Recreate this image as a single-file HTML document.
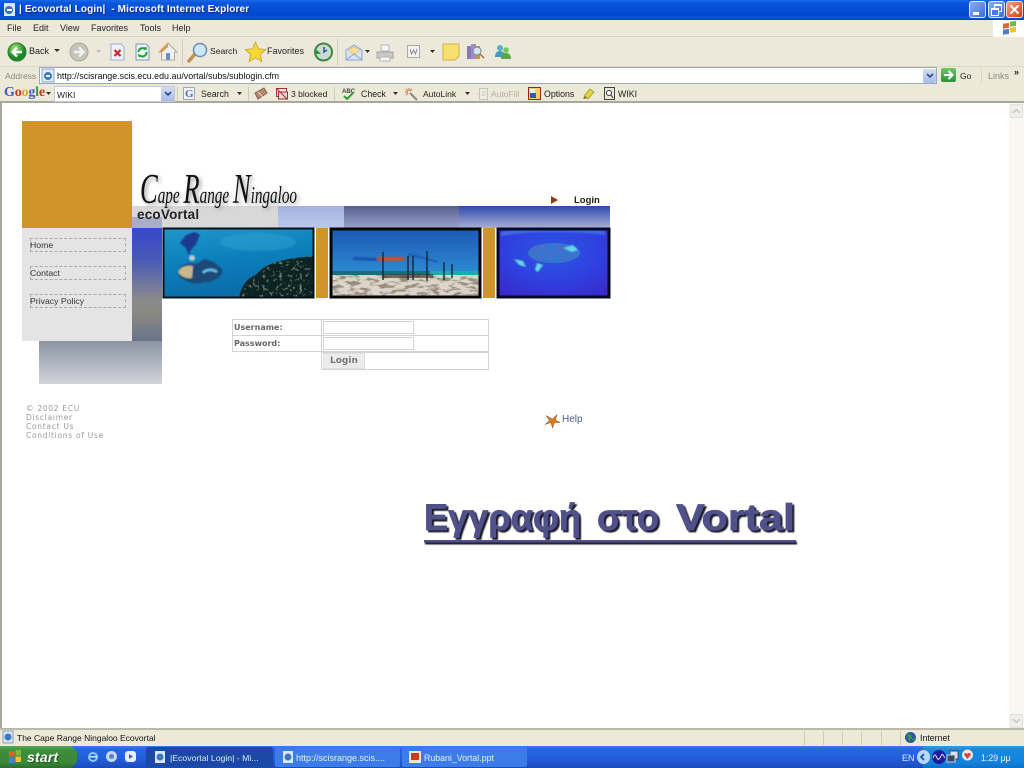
<!DOCTYPE html>
<html><head><meta charset="utf-8"><title>Ecovortal Login</title>
<style>
html,body{margin:0;padding:0;width:1024px;height:768px;overflow:hidden;background:#fff}
#p{position:absolute;left:0;top:0;width:1024px;height:768px;overflow:hidden;background:#fff;filter:blur(.3px);font-family:"Liberation Sans",sans-serif;font-size:9px;color:#222}
.a,.t{position:absolute}
.t{white-space:nowrap;line-height:12px}
svg{position:absolute;overflow:visible}
</style></head><body><div id="p">

<!-- title bar -->
<div class="a" style="left:0;top:0;width:1024px;height:20px;background:linear-gradient(#1a6ae8 0,#0a55dc 3px,#0450d8 8px,#0248cc 15px,#0a58dc 18px,#0a3ca8 20px)"></div>
<svg style="left:2px;top:2px" width="15" height="15"><rect x="2" y="1" width="11" height="13" fill="#dde6f4"/><circle cx="7" cy="8" r="4" fill="#3a70b8"/><rect x="5" y="7" width="5" height="2" fill="#fff"/></svg>
<div class="t" style="left:19px;top:4px;color:#fff;font-weight:bold;font-size:10px;letter-spacing:.14px;text-shadow:1px 1px 0 #0a2c8c">| Ecovortal Login|&nbsp; - Microsoft Internet Explorer</div>
<div class="a" style="left:969px;top:1px;width:17px;height:17px;border-radius:3px;background:linear-gradient(135deg,#8ab0f0,#3a6cd8);border:1px solid #dfe8fa;box-sizing:border-box"><div class="a" style="left:3px;top:10px;width:6px;height:3px;background:#fff"></div></div>
<div class="a" style="left:988px;top:1px;width:17px;height:17px;border-radius:3px;background:linear-gradient(135deg,#8ab0f0,#3a6cd8);border:1px solid #dfe8fa;box-sizing:border-box"><div class="a" style="left:5px;top:2px;width:6px;height:5px;border:1px solid #fff;border-top-width:2px"></div><div class="a" style="left:2px;top:6px;width:6px;height:5px;border:1px solid #fff;border-top-width:2px;background:#4a7ae0"></div></div>
<div class="a" style="left:1006px;top:1px;width:17px;height:17px;border-radius:3px;background:linear-gradient(135deg,#f0a080,#d83c14);border:1px solid #f4e0d8;box-sizing:border-box"><svg width="15" height="15"><path d="M3.500 3.500l8 8M11.500 3.500l-8 8" stroke="#fff" stroke-width="2"/></svg></div>

<!-- menu bar -->
<div class="a" style="left:0;top:20px;width:1024px;height:17px;background:#ece9d8;border-bottom:1px solid #d8d4c0;box-sizing:border-box"></div>
<div class="t" style="left:7px;top:22px">File</div>
<div class="t" style="left:33px;top:22px">Edit</div>
<div class="t" style="left:60px;top:22px">View</div>
<div class="t" style="left:91px;top:22px">Favorites</div>
<div class="t" style="left:140px;top:22px">Tools</div>
<div class="t" style="left:172px;top:22px">Help</div>
<div class="a" style="left:993px;top:20px;width:31px;height:17px;background:#fff"></div>
<svg style="left:1001px;top:20px" width="16" height="16"><g transform="skewY(-8)"><rect x="2" y="4" width="6" height="5" fill="#e8642c"/><rect x="9" y="3" width="6" height="5" fill="#7ab83c"/><rect x="2" y="10" width="6" height="5" fill="#4a7cd0"/><rect x="9" y="9" width="6" height="5" fill="#f0c030"/></g></svg>

<!-- main toolbar -->
<div class="a" style="left:0;top:37px;width:1024px;height:30px;background:#ede9da;border-bottom:1px solid #dcd8c8;box-sizing:border-box"></div>
<svg style="left:7px;top:42px" width="20" height="20"><defs><radialGradient id="g1" cx=".4" cy=".3"><stop offset="0" stop-color="#a8e878"/><stop offset="1" stop-color="#1a8a28"/></radialGradient></defs><circle cx="10" cy="10" r="9" fill="url(#g1)" stroke="#2a7a30"/><path d="M15 10H6M10 5.500L5.500 10 10 14.500" stroke="#fff" stroke-width="2.400" fill="none"/></svg>
<div class="t" style="left:29px;top:45px">Back</div>
<svg style="left:54px;top:49px" width="6" height="4"><path d="M0 0h6L3 3z" fill="#333"/></svg>
<svg style="left:69px;top:42px" width="20" height="20"><circle cx="10" cy="10" r="9" fill="#c4c4bc" stroke="#a8a8a0"/><path d="M5 10h9M10 5.500l4.500 4.500-4.500 4.500" stroke="#f2f2ee" stroke-width="2.400" fill="none"/></svg>
<svg style="left:96px;top:50px" width="5" height="3"><path d="M0 0h5L2.500 3z" fill="#bbb"/></svg>
<svg style="left:110px;top:43px" width="15" height="18"><path d="M1 1h10l3 3v13H1z" fill="#eef2fa" stroke="#9ab0d0"/><path d="M4.500 7l6 6M10.500 7l-6 6" stroke="#d42020" stroke-width="2.200"/></svg>
<svg style="left:135px;top:43px" width="15" height="18"><path d="M1 1h10l3 3v13H1z" fill="#eef2fa" stroke="#7a98b8"/><path d="M3.500 9a4 4 0 0 1 7-2.500M11.500 9a4 4 0 0 1-7 3" stroke="#20a030" stroke-width="2" fill="none"/><path d="M9 4l3 .5-.5 3zM6 14l-3-.5.500-3z" fill="#20a030"/></svg>
<svg style="left:158px;top:42px" width="20" height="19"><path d="M10 1L1 10h2.500v8h13v-8H19z" fill="#eef0f4" stroke="#b8a890"/><path d="M10 1L1 10h3.500L10 5z" fill="#e89838"/><rect x="8" y="11" width="4" height="7" fill="#6a90c8"/></svg>
<div class="a" style="left:182px;top:39px;width:1px;height:26px;background:#cfcbb8"></div>
<svg style="left:187px;top:42px" width="22" height="21"><path d="M8 12L2 19" stroke="#c89048" stroke-width="3.500" stroke-linecap="round"/><circle cx="13" cy="8" r="6.500" fill="#cfe8f8" stroke="#6a90b0" stroke-width="1.500"/></svg>
<div class="t" style="left:210px;top:45px;font-size:8.600px">Search</div>
<svg style="left:245px;top:42px" width="21" height="20"><path d="M10.500 0l3 6.800 7.300.7-5.500 4.900 1.600 7.200-6.400-3.800-6.400 3.800 1.600-7.200L.2 7.500l7.300-.7z" fill="#f4d838" stroke="#c8a020" stroke-width=".8"/></svg>
<div class="t" style="left:267px;top:45px">Favorites</div>
<svg style="left:313px;top:42px" width="20" height="20"><circle cx="10.500" cy="10" r="8.500" fill="#cfd8d8" stroke="#3a8a40" stroke-width="2"/><path d="M2 6v6h6z" fill="#2a9a30"/><path d="M11 5v5l3-2" stroke="#2a5a80" stroke-width="1.500" fill="none"/></svg>
<div class="a" style="left:337px;top:39px;width:1px;height:26px;background:#cfcbb8"></div>
<svg style="left:345px;top:44px" width="18" height="17"><path d="M1 6L9 1l8 5v10H1z" fill="#d8e4f8" stroke="#8aa4d0"/><path d="M3 6l6 5 6-5-6-3z" fill="#f4dc90" stroke="#d0b060" stroke-width=".5"/><path d="M1 16l8-6 8 6" fill="none" stroke="#8aa4d0"/></svg>
<svg style="left:365px;top:50px" width="5" height="3"><path d="M0 0h5L2.500 3z" fill="#333"/></svg>
<svg style="left:376px;top:44px" width="18" height="18"><path d="M5 1h8v6H5z" fill="#f4f4f4" stroke="#b8b8b8"/><path d="M1 8h16v6H1z" fill="#c8c8c4" stroke="#a4a4a4"/><path d="M4 13h10v4H4z" fill="#f4f4f0" stroke="#b8b8b8"/></svg>
<svg style="left:407px;top:45px" width="13" height="14"><rect x=".5" y=".5" width="12" height="12" fill="#f2f2f2" stroke="#a8a8a8"/><path d="M3 4l1.500 5 2-4 2 4L10 4" stroke="#8a8a8a" fill="none"/></svg>
<svg style="left:430px;top:50px" width="5" height="3"><path d="M0 0h5L2.500 3z" fill="#333"/></svg>
<svg style="left:442px;top:43px" width="18" height="18"><path d="M1 1h16v12l-4 4H1z" fill="#f8e070" stroke="#d8b040"/></svg>
<svg style="left:466px;top:43px" width="19" height="17"><rect x="1" y="3" width="4" height="13" fill="#8a78b0"/><rect x="5" y="1" width="5" height="15" fill="#a88ac0"/><rect x="10" y="3" width="4" height="13" fill="#b8a048"/><circle cx="11" cy="8" r="4" fill="#d8e8f0" stroke="#6a8aa0"/><path d="M14 11l4 4" stroke="#a07030" stroke-width="1.500"/></svg>
<svg style="left:493px;top:43px" width="19" height="17"><circle cx="7" cy="5" r="3" fill="#58b0c8"/><path d="M2 14c0-5 3-6 5-6s5 1 5 6z" fill="#4898c0"/><circle cx="13" cy="7" r="2.800" fill="#70c858"/><path d="M8 16c0-5 3-6 5-6s5 1 5 6z" fill="#58a848"/></svg>

<!-- address bar -->
<div class="a" style="left:0;top:67px;width:1024px;height:18px;background:#ece9d8"></div>
<div class="t" style="left:5px;top:70px;color:#8a8a80;font-size:8.500px">Address</div>
<div class="a" style="left:39px;top:67px;width:898px;height:17px;background:#fff;border:1px solid #9aa8c8;box-sizing:border-box"></div>
<svg style="left:41px;top:68px" width="14" height="15"><rect x="1" y="1" width="12" height="13" fill="#e4ecf8" stroke="#88a0c8"/><circle cx="7" cy="8" r="4" fill="#3a78c0"/><rect x="5" y="7" width="4" height="2" fill="#dff"/></svg>
<div class="t" style="left:57px;top:70px;color:#111;font-size:8.900px">http://scisrange.scis.ecu.edu.au/vortal/subs/sublogin.cfm</div>
<div class="a" style="left:923px;top:69px;width:13px;height:14px;background:linear-gradient(#d4def4,#aabce8);border-radius:2px"></div>
<svg style="left:926px;top:73px" width="8" height="6"><path d="M1 1l3 3 3-3" stroke="#2a4a8a" stroke-width="1.600" fill="none"/></svg>
<div class="a" style="left:941px;top:68px;width:15px;height:14px;background:linear-gradient(#70c868,#20963a);border-radius:2px"></div>
<svg style="left:941px;top:68px" width="15" height="14"><path d="M3 7h8M7.500 3L11.500 7l-4 4" stroke="#fff" stroke-width="2" fill="none"/></svg>
<div class="t" style="left:960px;top:70px;font-size:8.500px">Go</div>
<div class="a" style="left:981px;top:69px;width:1px;height:14px;background:#d8d4c0"></div>
<div class="t" style="left:988px;top:70px;color:#8a8a80">Links</div>
<div class="t" style="left:1014px;top:66px;font-weight:bold;font-size:9px;color:#222">»</div>

<!-- google toolbar -->
<div class="a" style="left:0;top:85px;width:1024px;height:18px;background:#ece9d8;border-bottom:2px solid #a8a89c;box-sizing:border-box"></div>
<div class="t" style="left:4px;top:87px;font-family:'Liberation Serif',serif;font-weight:bold;font-size:14px;letter-spacing:-.2px"><span style="color:#3a5cc0">G</span><span style="color:#d03020">o</span><span style="color:#d8a820">o</span><span style="color:#3a5cc0">g</span><span style="color:#30a040">l</span><span style="color:#d03020">e</span></div>
<svg style="left:46px;top:92px" width="5" height="3"><path d="M0 0h5L2.500 3z" fill="#333"/></svg>
<div class="a" style="left:54px;top:86px;width:121px;height:16px;background:#fff;border:1px solid #c4c8d0;box-sizing:border-box"></div>
<div class="t" style="left:57px;top:89px;font-size:8.500px">WIKI</div>
<div class="a" style="left:161px;top:87px;width:13px;height:14px;background:linear-gradient(#d4def4,#aabce8)"></div>
<svg style="left:164px;top:91px" width="8" height="6"><path d="M1 1l3 3 3-3" stroke="#2a4a8a" stroke-width="1.600" fill="none"/></svg>
<div class="a" style="left:177px;top:87px;width:1px;height:14px;background:#cfcbb8"></div>
<div class="a" style="left:183px;top:87px;width:12px;height:13px;background:#f2f4f8;border:1px solid #a0a8b8;box-sizing:border-box"></div>
<div class="t" style="left:185px;top:88px;color:#4a70c0;font-family:'Liberation Serif',serif;font-weight:bold;font-size:11px">G</div>
<div class="t" style="left:201px;top:88px;font-size:8.800px">Search</div>
<svg style="left:237px;top:92px" width="5" height="3"><path d="M0 0h5L2.500 3z" fill="#333"/></svg>
<div class="a" style="left:248px;top:87px;width:1px;height:14px;background:#cfcbb8"></div>
<svg style="left:254px;top:87px" width="14" height="14"><path d="M1 6l9-5 3 5-9 6z" fill="#b88870" stroke="#806050"/><path d="M4 5l5 5" stroke="#e8d8c8"/></svg>
<svg style="left:275px;top:87px" width="14" height="14"><rect x="1.500" y="1.500" width="10" height="8" fill="#f4e8e8" stroke="#a03030"/><rect x="3.500" y="5" width="9" height="7" fill="#e8d8e0" stroke="#a03030"/><path d="M2 2l10 10" stroke="#c02020"/></svg>
<div class="t" style="left:291px;top:88px;font-size:8.500px">3 blocked</div>
<div class="a" style="left:334px;top:87px;width:1px;height:14px;background:#cfcbb8"></div>
<div class="t" style="left:342px;top:86px;font-size:6px;font-weight:bold;color:#444">ABC</div>
<svg style="left:342px;top:92px" width="13" height="9"><path d="M2 4l3 3 6-6" stroke="#30a030" stroke-width="2" fill="none"/></svg>
<div class="t" style="left:361px;top:88px;font-size:8.800px">Check</div>
<svg style="left:393px;top:92px" width="5" height="3"><path d="M0 0h5L2.500 3z" fill="#333"/></svg>
<svg style="left:404px;top:87px" width="14" height="14"><path d="M6 6l7 7" stroke="#888" stroke-width="2"/><path d="M5 1v3M1 5h3M2 2l2 2M8 2L6 4M2 8l2-2" stroke="#e08060" stroke-width="1.300"/></svg>
<div class="t" style="left:423px;top:88px;font-size:8.500px">AutoLink</div>
<svg style="left:465px;top:92px" width="5" height="3"><path d="M0 0h5L2.500 3z" fill="#333"/></svg>
<svg style="left:477px;top:87px" width="12" height="14"><rect x="2.500" y="1.500" width="8" height="11" fill="#f0eee4" stroke="#c4c4b8"/><path d="M4 5h5M4 8h5M0 7h3" stroke="#c8c8bc"/></svg>
<div class="t" style="left:491px;top:88px;color:#b0b0a4;font-size:8.500px">AutoFill</div>
<svg style="left:528px;top:87px" width="13" height="13"><rect x=".5" y=".5" width="12" height="12" fill="#f0d060" stroke="#a02020"/><rect x="2" y="2" width="5" height="4" fill="#e0f0f8"/><rect x="2" y="6" width="6" height="5" fill="#3858b8"/></svg>
<div class="t" style="left:544px;top:88px;font-size:8.800px">Options</div>
<svg style="left:582px;top:87px" width="14" height="14"><path d="M2 9l6-7 4 3-6 7z" fill="#e4d438" stroke="#a8a840"/><path d="M1 12l2-3 2 2z" fill="#706020"/></svg>
<svg style="left:604px;top:87px" width="11" height="14"><rect x=".5" y=".5" width="10" height="12" fill="#ece9d8" stroke="#444"/><circle cx="5" cy="6" r="2.500" fill="#fff" stroke="#333"/><path d="M7 8l2 3" stroke="#333"/></svg>
<div class="t" style="left:618px;top:88px;font-size:8.800px">WIKI</div>

<!-- window frame + scrollbar -->
<div class="a" style="left:0;top:103px;width:2px;height:626px;background:#a8a89c"></div>
<div class="a" style="left:1009px;top:103px;width:15px;height:626px;background:#f8f7f2"></div>
<div class="a" style="left:1010px;top:104px;width:13px;height:14px;background:#eef0ee;border:1px solid #e0e2dc;box-sizing:border-box"></div>
<div class="a" style="left:1010px;top:714px;width:13px;height:14px;background:#eef0ee;border:1px solid #e0e2dc;box-sizing:border-box"></div>
<svg style="left:1012px;top:108px" width="9" height="6"><path d="M1 5l3.500-3.500L8 5" stroke="#c4c8c4" stroke-width="1.500" fill="none"/></svg>
<svg style="left:1012px;top:718px" width="9" height="6"><path d="M1 1l3.500 3.500L8 1" stroke="#c4c8c4" stroke-width="1.500" fill="none"/></svg>

<!-- page left blocks -->
<div class="a" style="left:22px;top:121px;width:110px;height:107px;background:#d09428"></div>
<div class="a" style="left:22px;top:228px;width:110px;height:113px;background:#e4e4e4"></div>
<div class="a" style="left:132px;top:228px;width:30px;height:113px;background:linear-gradient(#3848c8 0,#4858b8 30px,#8a8a8c 72px,#8a8884 85px,#687488 113px)"></div>
<div class="a" style="left:39px;top:341px;width:123px;height:43px;background:linear-gradient(#8c94a4,#d2d6da)"></div>
<div class="a" style="left:30px;top:238px;width:96px;height:14px;border:1px dashed #aaa;box-sizing:border-box"></div>
<div class="a" style="left:30px;top:266px;width:96px;height:14px;border:1px dashed #aaa;box-sizing:border-box"></div>
<div class="a" style="left:30px;top:294px;width:96px;height:14px;border:1px dashed #aaa;box-sizing:border-box"></div>
<div class="t" style="left:30px;top:239px;color:#333;font-size:8.700px">Home</div>
<div class="t" style="left:30px;top:267px;color:#333;font-size:8.700px">Contact</div>
<div class="t" style="left:30px;top:295px;color:#333;font-size:8.700px">Privacy Policy</div>

<!-- header strip -->
<div class="a" style="left:132px;top:206px;width:146px;height:22px;background:#d8d8d8"></div>
<div class="a" style="left:132px;top:217px;width:30px;height:11px;background:#a8aec4"></div>
<div class="a" style="left:278px;top:206px;width:66px;height:22px;background:linear-gradient(#a4b4e0,#bcc8ec)"></div>
<div class="a" style="left:344px;top:206px;width:115px;height:22px;background:linear-gradient(#566090,#9aa2c8)"></div>
<div class="a" style="left:459px;top:206px;width:151px;height:22px;background:linear-gradient(#3448b0,#a8b0d4)"></div>
<div class="t" style="left:137px;top:207px;font-size:13.500px;line-height:15px;font-weight:bold;color:#222;letter-spacing:.2px">ecoVortal</div>
<svg style="left:0;top:0" width="1024" height="768"><text x="140" y="203" textLength="157" lengthAdjust="spacingAndGlyphs" font-family="'Liberation Serif',serif" font-style="italic" font-size="24" fill="#111" style="filter:drop-shadow(2px 2px 2px #999)"><tspan font-size="42">C</tspan>ape <tspan font-size="42">R</tspan>ange <tspan font-size="42">N</tspan>ingaloo</text></svg>
<svg style="left:551px;top:196px" width="7" height="8"><path d="M0 0l7 4-7 4z" fill="#8a3c20"/></svg>
<div class="t" style="left:574px;top:195px;font-weight:bold;color:#222;font-size:9.500px">Login</div>

<!-- photo 1 -->
<svg style="left:163px;top:228px" width="151" height="70" viewBox="0 0 151 70">
<defs>
<linearGradient id="w1" x1="0" y1="0" x2=".3" y2="1"><stop offset="0" stop-color="#2296cc"/><stop offset=".5" stop-color="#0c80bc"/><stop offset="1" stop-color="#0a6ca8"/></linearGradient>
<filter id="sb" x="-5%" y="-5%" width="110%" height="110%"><feGaussianBlur stdDeviation=".7"/></filter>
<filter id="tx" x="0" y="0" width="100%" height="100%"><feTurbulence type="fractalNoise" baseFrequency=".3" numOctaves="2" seed="4"/><feColorMatrix values="0 0 0 0 .16  0 0 0 0 .3  0 0 0 0 .22  4 0 0 0 -2.300"/><feComposite in2="SourceGraphic" operator="in"/><feMerge><feMergeNode in="SourceGraphic"/><feMergeNode/></feMerge></filter>
</defs>
<rect width="151" height="70" fill="url(#w1)"/>
<g filter="url(#sb)">
<ellipse cx="95" cy="14" rx="38" ry="9" fill="#3aa8d4" opacity=".4"/>
<path d="M17 15l6-8 9-3 5 3-4 9-5 6-2 6-3-8z" fill="#1a3a90"/>
<path d="M15 44c1-7 10-10 18-8l9-5 9 3 7 6c3 4 0 9-5 11-5 3-8 4-11 3-8 3-16 1-20-2-4-1-7-4-7-8z" fill="#1c4878"/>
<path d="M15 44c3-6 10-7 15-6l-1 12c-6 1-12-2-14-6z" fill="#c8b88a"/>
<circle cx="29" cy="30" r="3" fill="#b8ccd0"/>
<path d="M40 45c3-4 10-4 14-1" stroke="#68c0e8" stroke-width="2.500" fill="none"/>
</g>
<path d="M76 70c3-14 9-20 18-24 8-10 22-15 57-18v42z" fill="#0a2020" filter="url(#tx)"/>
<rect x=".5" y=".5" width="150" height="69" fill="none" stroke="#081018" stroke-width="2"/>
</svg>
<div class="a" style="left:316px;top:228px;width:12px;height:70px;background:#d09428"></div>

<!-- photo 2 -->
<svg style="left:330px;top:228px" width="151" height="70" viewBox="0 0 151 70">
<defs>
<linearGradient id="s2" x1="0" y1="0" x2="0" y2="1"><stop offset="0" stop-color="#1c58b4"/><stop offset="1" stop-color="#2c8ad0"/></linearGradient>
<filter id="sand" x="0" y="0" width="100%" height="100%"><feTurbulence type="fractalNoise" baseFrequency=".1 .28" numOctaves="3" seed="8"/><feColorMatrix values="0 0 0 0 .32  0 0 0 0 .26  0 0 0 0 .2  5 0 0 0 -2.300"/><feComposite in2="SourceGraphic" operator="in"/><feMerge><feMergeNode in="SourceGraphic"/><feMergeNode/></feMerge></filter>
</defs>
<rect width="151" height="44" fill="url(#s2)"/>
<rect y="43" width="151" height="5" fill="#14707c"/>
<rect x="100" y="43" width="51" height="5" fill="#20a8b0"/>
<rect y="47" width="151" height="23" fill="#dcd6ca" filter="url(#sand)"/>
<g filter="url(#sb)">
<path d="M23 29l26 1 20-1-1 3-20 1-25-1z" fill="#1c50b0"/>
<path d="M47 29h27v4H48z" fill="#c8502c"/>
<path d="M78 26l30 8" stroke="#1c50b0" stroke-width="1.500"/>
</g>
<path d="M53 48h50" stroke="#4a3c30" stroke-width="4" opacity=".7"/>
<path d="M53 24v28M78 28v24M83 28v24M97 23v30M114 34v18M122 36v14" stroke="#1a2438" stroke-width="1.400"/>
<rect x="1" y="1" width="149" height="68" fill="none" stroke="#060608" stroke-width="3"/>
</svg>
<div class="a" style="left:483px;top:228px;width:12px;height:70px;background:#d09428"></div>

<!-- photo 3 -->
<svg style="left:497px;top:228px" width="113" height="70" viewBox="0 0 113 70">
<defs><radialGradient id="r3" cx=".5" cy=".35" r=".75"><stop offset="0" stop-color="#2a58e0"/><stop offset=".55" stop-color="#3040e0"/><stop offset="1" stop-color="#3a28c8"/></radialGradient>
<filter id="fish" x="0" y="0" width="100%" height="100%"><feTurbulence type="fractalNoise" baseFrequency=".35" numOctaves="2" seed="3"/><feColorMatrix values="0 0 0 0 .1  0 0 0 0 .14  0 0 0 0 .5  6 0 0 0 -2.800"/><feComposite in2="SourceGraphic" operator="in"/><feMerge><feMergeNode in="SourceGraphic"/><feMergeNode/></feMerge></filter>
</defs>
<rect width="113" height="70" fill="url(#r3)"/>
<ellipse cx="57" cy="25" rx="26" ry="10" fill="#2a78d8" filter="url(#fish)"/>
<g filter="url(#sb)">
<path d="M17 31l9 2 3 6-7-2zM40 35l6 2-5 7-3-2zM66 20l10-3 5 5-6 2z" fill="#60d8e8"/>
<path d="M4 6c30-5 70-5 104-1" stroke="#3a6ae8" stroke-width="4" fill="none"/>
</g>
<rect x="1" y="1" width="111" height="68" fill="none" stroke="#080828" stroke-width="3"/>
</svg>

<!-- login form -->
<div class="a" style="left:232px;top:319px;width:257px;height:17px;border:1px solid #d4d4d4;box-sizing:border-box"></div>
<div class="a" style="left:232px;top:335px;width:257px;height:17px;border:1px solid #d4d4d4;box-sizing:border-box"></div>
<div class="a" style="left:321px;top:319px;width:1px;height:33px;background:#d4d4d4"></div>
<div class="a" style="left:321px;top:352px;width:168px;height:18px;border:1px solid #d4d4d4;box-sizing:border-box"></div>
<div class="t" style="left:234px;top:322px;font-family:'DejaVu Sans',sans-serif;font-size:8px;font-weight:bold;color:#666">Username:</div>
<div class="t" style="left:234px;top:338px;font-family:'DejaVu Sans',sans-serif;font-size:8px;font-weight:bold;color:#666">Password:</div>
<div class="a" style="left:323px;top:321px;width:91px;height:13px;background:#fff;border:1px solid #d4d4d4;box-sizing:border-box"></div>
<div class="a" style="left:323px;top:337px;width:91px;height:13px;background:#fff;border:1px solid #d4d4d4;box-sizing:border-box"></div>
<div class="a" style="left:323px;top:353px;width:42px;height:16px;background:#ececec;border:1px solid #e0e0e0;box-sizing:border-box"></div>
<div class="t" style="left:330px;top:355px;font-family:'DejaVu Sans',sans-serif;font-size:9px;font-weight:bold;color:#777">Login</div>

<!-- footer -->
<div class="t" style="left:26px;top:404px;font-family:'DejaVu Sans',sans-serif;font-size:7.500px;line-height:9px;color:#999;letter-spacing:.72px">© 2002 ECU<br>Disclaimer<br>Contact Us<br>Conditions of Use</div>
<svg style="left:544px;top:413px" width="17" height="16"><path d="M8.500 6L13 1.500 11.500 7 16 9.500 10.500 9.500 8.500 15 7 9.500 1 11.500 5.500 7.500 2 2.500z" fill="#d87c28" stroke="#8a5020" stroke-width=".5"/></svg>
<div class="t" style="left:562px;top:414px;font-size:10px;color:#4a5a88">Help</div>

<!-- heading -->
<svg style="left:0;top:0" width="1024" height="768">
<defs><filter id="hs" x="-2%" y="-10%" width="104%" height="120%"><feGaussianBlur stdDeviation=".5"/></filter></defs>
<g font-family="'Liberation Sans',sans-serif" font-weight="bold" font-size="37" stroke-width=".7" stroke-linejoin="round">
<g fill="#1c1c2c" stroke="#1c1c2c" filter="url(#hs)">
<text x="426" y="532" textLength="157" lengthAdjust="spacingAndGlyphs">Εγγραφή</text>
<text x="599" y="532" textLength="62" lengthAdjust="spacingAndGlyphs">στο</text>
<text x="678" y="532" textLength="119" lengthAdjust="spacingAndGlyphs">Vortal</text>
<rect x="425" y="541.500" width="372" height="3" stroke="none"/>
</g>
<g fill="#50508a" stroke="#50508a">
<text x="424" y="530" textLength="157" lengthAdjust="spacingAndGlyphs">Εγγραφή</text>
<text x="597" y="530" textLength="62" lengthAdjust="spacingAndGlyphs">στο</text>
<text x="676" y="530" textLength="119" lengthAdjust="spacingAndGlyphs">Vortal</text>
<rect x="424" y="540" width="372" height="2.500" stroke="none"/>
</g>
</g>
</svg>

<!-- status bar -->
<div class="a" style="left:0;top:728px;width:1024px;height:18px;background:#ece9d8;border-top:2px solid #bdb9a8;box-sizing:border-box"></div>
<svg style="left:1px;top:730px" width="14" height="14"><rect x="2" y="1" width="10" height="12" fill="#dde6f4" stroke="#88a0c8"/><circle cx="7" cy="7" r="3.500" fill="#3a78c0"/></svg>
<div class="t" style="left:17px;top:732px;color:#111;font-size:8.500px">The Cape Range Ningaloo Ecovortal</div>
<div class="a" style="left:804px;top:731px;width:1px;height:14px;background:#cfcbb8"></div>
<div class="a" style="left:823px;top:731px;width:1px;height:14px;background:#cfcbb8"></div>
<div class="a" style="left:842px;top:731px;width:1px;height:14px;background:#cfcbb8"></div>
<div class="a" style="left:861px;top:731px;width:1px;height:14px;background:#cfcbb8"></div>
<div class="a" style="left:881px;top:731px;width:1px;height:14px;background:#cfcbb8"></div>
<div class="a" style="left:900px;top:731px;width:1px;height:14px;background:#cfcbb8"></div>
<svg style="left:904px;top:731px" width="13" height="13"><circle cx="6.500" cy="6.500" r="5.500" fill="#2a5a9a"/><path d="M3 3l4 1 1 3-3 3zM8 8l3-1-1 3z" fill="#30a040"/></svg>
<div class="t" style="left:920px;top:732px;color:#111;font-size:8.800px">Internet</div>

<!-- taskbar -->
<div class="a" style="left:0;top:746px;width:1024px;height:22px;background:linear-gradient(#3a80e8 0,#2468dc 3px,#245edc 12px,#1c50c4 20px,#1a48b8 22px)"></div>
<div class="a" style="left:0;top:746px;width:77px;height:22px;border-radius:0 9px 9px 0;background:linear-gradient(#58a858,#3c8c3c 20%,#3a8a3a 75%,#2a6c2a)"></div>
<svg style="left:8px;top:750px" width="14" height="14"><rect x="1" y="1" width="5.500" height="5.500" fill="#e85c28"/><rect x="7.500" y="0" width="5.500" height="5.500" fill="#80b838"/><rect x="1" y="7.500" width="5.500" height="5.500" fill="#4880d8"/><rect x="7.500" y="6.500" width="5.500" height="5.500" fill="#f0c030"/></svg>
<div class="t" style="left:27px;top:749px;color:#fff;font-style:italic;font-weight:bold;font-size:14px;line-height:16px;text-shadow:1px 1px 1px #1a4a1a;letter-spacing:.2px">start</div>
<svg style="left:87px;top:751px" width="12" height="12"><circle cx="6" cy="6" r="4" fill="none" stroke="#8ac8f0" stroke-width="2"/><rect x="3" y="5" width="7" height="1.500" fill="#cfeaff"/></svg>
<svg style="left:105px;top:750px" width="13" height="13"><circle cx="6.500" cy="6.500" r="5.500" fill="#c8d8f0"/><circle cx="6.500" cy="6.500" r="2.500" fill="#5a80c0"/></svg>
<svg style="left:124px;top:750px" width="13" height="13"><rect x="1" y="1" width="11" height="11" rx="3" fill="#e8eef8"/><path d="M5 4l4 2.500L5 9z" fill="#3860a8"/></svg>
<div class="a" style="left:146px;top:747px;width:127px;height:20px;background:#1c48a8;border-radius:2px"></div>
<svg style="left:153px;top:750px" width="14" height="14"><rect x="2" y="1" width="10" height="12" fill="#dde6f4"/><circle cx="7" cy="7" r="3.500" fill="#3a78c0"/></svg>
<div class="t" style="left:170px;top:752px;color:#dce8fa;font-size:8.700px">|Ecovortal Login| - Mi...</div>
<div class="a" style="left:275px;top:747px;width:125px;height:20px;background:#3c7ce8;border-radius:2px"></div>
<svg style="left:281px;top:750px" width="14" height="14"><rect x="2" y="1" width="10" height="12" fill="#dde6f4"/><circle cx="7" cy="7" r="3.500" fill="#3a78c0"/></svg>
<div class="t" style="left:296px;top:752px;color:#e8f0fc">http://scisrange.scis....</div>
<div class="a" style="left:402px;top:747px;width:125px;height:20px;background:#3c7ce8;border-radius:2px"></div>
<svg style="left:408px;top:750px" width="14" height="14"><rect x="1" y="1" width="12" height="12" fill="#f0e4d0"/><rect x="3" y="3" width="8" height="7" fill="#c83c28"/></svg>
<div class="t" style="left:424px;top:752px;color:#e8f0fc;font-size:8.800px">Rubani_Vortal.ppt</div>

<!-- tray -->
<div class="t" style="left:902px;top:752px;color:#dfe8fa">EN</div>
<div class="a" style="left:923px;top:746px;width:101px;height:22px;background:linear-gradient(#28a0ec 0,#1488e0 4px,#1484dc 16px,#0c70cc 22px)"></div>
<div class="a" style="left:917px;top:750px;width:13px;height:14px;border-radius:50%;background:#b8d8f8"></div>
<svg style="left:919px;top:753px" width="8" height="8"><path d="M5 1L2 4l3 3" stroke="#1c50b0" stroke-width="1.800" fill="none"/></svg>
<div class="a" style="left:932px;top:750px;width:14px;height:14px;border-radius:50%;background:#1c1c9c"></div>
<svg style="left:933px;top:753px" width="12" height="8"><path d="M0 5c2-6 3-2 4 0s2 2 4-2 2 0 4 2" stroke="#dde" fill="none"/></svg>
<svg style="left:946px;top:750px" width="13" height="14"><rect x="4" y="1" width="8" height="8" fill="#d8e4f0" stroke="#446"/><rect x="1" y="5" width="8" height="7" fill="#384868" stroke="#c8d0e0"/></svg>
<svg style="left:961px;top:749px" width="13" height="13"><circle cx="6.500" cy="6" r="5.500" fill="#f0e4e0"/><path d="M6.500 10L3 5.500c1-2 3-2 3.500 0 .5-2 2.500-2 3.500 0z" fill="#d04040"/></svg>
<div class="t" style="left:981px;top:752px;color:#e8f4fc;font-size:8.800px">1:29 μμ</div>

</div></body></html>
